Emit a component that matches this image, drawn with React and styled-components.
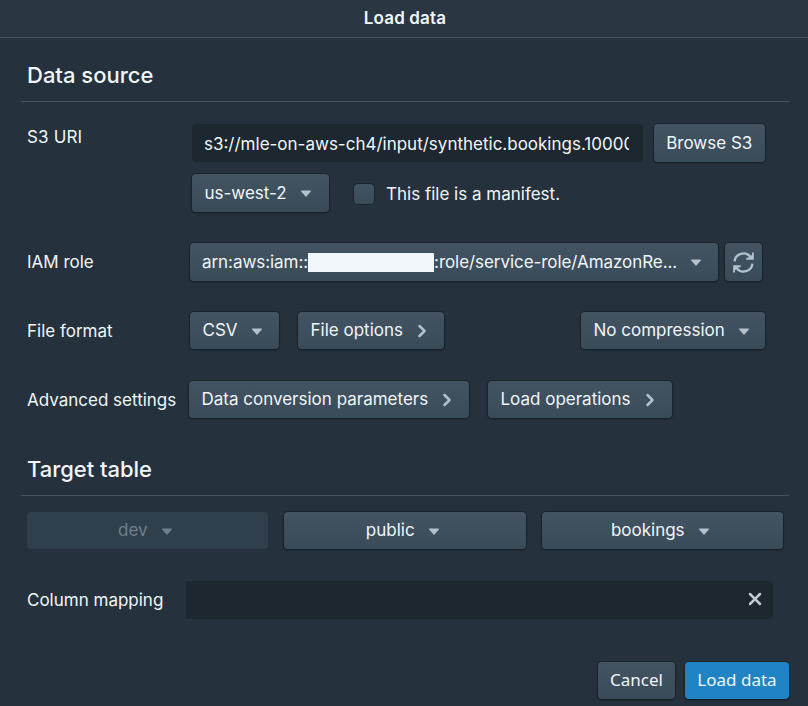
import React from "react";
import styled, { createGlobalStyle } from "styled-components";

const Global = createGlobalStyle`
  * { box-sizing: border-box; }
  html, body { margin: 0; background: #25313c; }
  body { font-family: Inter, "Liberation Sans", sans-serif; font-size: 17px; color: #f0f6fa; overflow: hidden; }
  button, input { font: inherit; color: inherit; margin: 0; }
`;

const Dialog = styled.main`
  width: 808px;
  height: 706px;
  background: #25313c;
  display: flex;
  flex-direction: column;
`;

const Header = styled.header`
  height: 38px;
  flex: none;
  display: flex;
  justify-content: center;
  background: #2a3742;
  border-bottom: 1px solid #425462;
`;

const Title = styled.h1`
  margin: 0;
  padding-left: 2px;
  font-size: 17px;
  line-height: 36px;
  font-weight: 600;
  letter-spacing: 0.15px;
`;

const SectionTitle = styled.h2`
  margin: 0 19px 0 21px;
  padding: 0 6px;
  height: ${(p) => p.$height}px;
  border-bottom: 1px solid #425462;
  display: flex;
  align-items: flex-end;
  font-size: 22px;
  line-height: 51px;
  font-weight: 550;
  letter-spacing: ${(p) => p.$spacing || 0}px;
`;

const Row = styled.div`
  display: flex;
  flex: none;
  height: ${(p) => p.$height || 38}px;
  margin-top: ${(p) => p.$top}px;
  padding-left: 27px;
`;

const Label = styled.label`
  flex: none;
  width: ${(p) => p.$width}px;
  line-height: ${(p) => p.$line || 38}px;
  letter-spacing: ${(p) => p.$spacing || 0}px;
  white-space: nowrap;
`;

const Button = styled.button`
  flex: none;
  width: ${(p) => p.$width}px;
  height: 100%;
  margin-left: ${(p) => p.$left || 0}px;
  padding: 0 ${(p) => p.$end || 13}px 0 ${(p) => p.$start || 12.5}px;
  display: flex;
  align-items: center;
  justify-content: ${(p) => (p.$center ? "center" : "space-between")};
  gap: 9px;
  border: 0;
  border-radius: 4px;
  background: linear-gradient(#435361, #394b59);
  box-shadow: 0 0 0 1px rgba(16, 22, 26, 0.4), 0 1px 1px 1px rgba(16, 22, 26, 0.25);
  letter-spacing: ${(p) => p.$spacing || 0}px;
  white-space: nowrap;

  &:disabled {
    background: #2f3f4c;
    box-shadow: none;
    color: #70808b;
  }
`;

const IconButton = styled(Button)`
  padding: 0 1px 0 0;
  justify-content: center;
`;

const FooterButton = styled(Button)`
  padding: 0;
  font-family: "Noto Sans", sans-serif;
  background: ${(p) => (p.$primary ? "#1f83c4" : "linear-gradient(#435361, #394b59)")};
`;

const Caption = styled.span`
  display: inline-flex;
  align-items: center;
  line-height: 34px;
  padding-bottom: ${(p) => p.$lift || 0}px;
`;

const UriInput = styled.input`
  width: 451px;
  height: 38px;
  padding: 2px 14px 0 12px;
  border: 0;
  border-radius: 4px;
  outline: 0;
  background: #1d272f;
`;

const Checkbox = styled.span`
  width: 20px;
  height: 20px;
  margin: 10px 12px 0 25px;
  border-radius: 4px;
  background: linear-gradient(#435361, #394b59);
  box-shadow: 0 0 0 1px rgba(16, 22, 26, 0.5);
`;

const Redaction = styled.span`
  width: 126px;
  height: 19px;
  background: #f2f7fb;
`;

const MappingField = styled.div`
  width: 587px;
  height: 38px;
  display: flex;
  align-items: center;
  justify-content: flex-end;
  padding: 0 8px 2px 0;
  border-radius: 4px;
  background: #1d272f;
`;

const Glyph = styled.svg`
  flex: none;
  display: block;
  width: ${(p) => p.$size || 20}px;
  height: ${(p) => p.$size || 20}px;
  fill: ${(p) => p.$color || "#b4c1cb"};
`;

const Caret = ({ color }) => (
  <Glyph viewBox="0 0 16 16" $color={color}>
    <path d="M12 6.5c0-.28-.22-.5-.5-.5h-7a.495.495 0 00-.37.83l3.5 4c.09.1.22.17.37.17s.28-.07.37-.17l3.5-4c.08-.09.13-.2.13-.33z" />
  </Glyph>
);

const Chevron = () => (
  <Glyph viewBox="0 0 16 16">
    <path d="M10.71 7.29l-4-4a1.003 1.003 0 00-1.42 1.42L8.59 8 5.3 11.29c-.19.18-.3.43-.3.71a1.003 1.003 0 001.71.71l4-4c.18-.18.29-.43.29-.71 0-.28-.11-.53-.29-.71z" />
  </Glyph>
);

const Cross = () => (
  <Glyph viewBox="0 0 16 16" $color="#bfccd6">
    <path d="M9.41 8l3.29-3.29c.19-.18.3-.43.3-.71a1.003 1.003 0 00-1.71-.71L8 6.59l-3.29-3.3a1.003 1.003 0 00-1.42 1.42L6.59 8 3.3 11.29c-.19.18-.3.43-.3.71a1.003 1.003 0 001.71.71L8 9.41l3.29 3.3c.18.18.43.29.71.29a1.003 1.003 0 00.71-1.71L9.41 8z" />
  </Glyph>
);

const Refresh = () => (
  <Glyph viewBox="0 0 21 21" $size={21}>
    <path d="M1.5 9.4A9 9 0 0 1 17.4 4.8M19.5 11.6A9 9 0 0 1 3.6 16.2" fill="none" stroke="#b4c1cb" strokeWidth="2.3" />
    <path d="M20.8 .6V7.7H13.2V6L16.2 5.2L19 2.8V.6ZM.2 20.4V13.3H7.8V15L4.8 15.8L2 18.2V20.4Z" />
  </Glyph>
);

export default function App() {
  return (
    <>
      <Global />
      <Dialog>
        <Header>
          <Title>Load data</Title>
        </Header>

        <SectionTitle $height={64}>Data source</SectionTitle>
        <Row $top={22}>
          <Label $width={165} $line={27} $spacing={0.15}>S3 URI</Label>
          <UriInput readOnly defaultValue="s3://mle-on-aws-ch4/input/synthetic.bookings.100000.csv" />
          <Button $width={111} $left={11} $center><Caption>Browse S3</Caption></Button>
        </Row>
        <Row $top={12}>
          <Label $width={165} />
          <Button $width={137}><Caption>us-west-2</Caption><Caret /></Button>
          <Checkbox />
          <Label $line={40}>This file is a manifest.</Label>
        </Row>
        <Row $top={31}>
          <Label $width={163}>IAM role</Label>
          <Button $width={528} $start={12} $end={12} $spacing={-0.06}>
            <Caption>arn:aws:iam::<Redaction />:role/service-role/AmazonRe...</Caption>
            <Caret />
          </Button>
          <IconButton $width={37} $left={7} aria-label="Refresh roles"><Refresh /></IconButton>
        </Row>
        <Row $top={31} $height={37}>
          <Label $width={163}>File format</Label>
          <Button $width={89}><Caption $lift={2}>CSV</Caption><Caret /></Button>
          <Button $width={146} $left={19}><Caption $lift={2}>File options</Caption><Chevron /></Button>
          <Button $width={184} $left={137}><Caption $lift={2}>No compression</Caption><Caret /></Button>
        </Row>
        <Row $top={32} $height={37}>
          <Label $width={162}>Advanced settings</Label>
          <Button $width={280}><Caption $lift={2}>Data conversion parameters</Caption><Chevron /></Button>
          <Button $width={184} $left={19}><Caption $lift={2}>Load operations</Caption><Chevron /></Button>
        </Row>

        <SectionTitle $height={78} $spacing={-0.05}>Target table</SectionTitle>
        <Row $top={16} $height={37}>
          <Button $width={241} $center disabled><Caption $lift={2}>dev</Caption><Caret color="#70808b" /></Button>
          <Button $width={242} $left={16} $center><Caption $lift={2}>public</Caption><Caret /></Button>
          <Button $width={241} $left={16} $center><Caption $lift={2}>bookings</Caption><Caret /></Button>
        </Row>
        <Row $top={32} $height={37}>
          <Label $width={158.5}>Column mapping</Label>
          <MappingField><Cross /></MappingField>
        </Row>
        <Row $top={44} $height={37}>
          <FooterButton $width={77} $left={571} $center><Caption $lift={2}>Cancel</Caption></FooterButton>
          <FooterButton $width={104} $left={10} $center $primary><Caption $lift={2}>Load data</Caption></FooterButton>
        </Row>
      </Dialog>
    </>
  );
}
